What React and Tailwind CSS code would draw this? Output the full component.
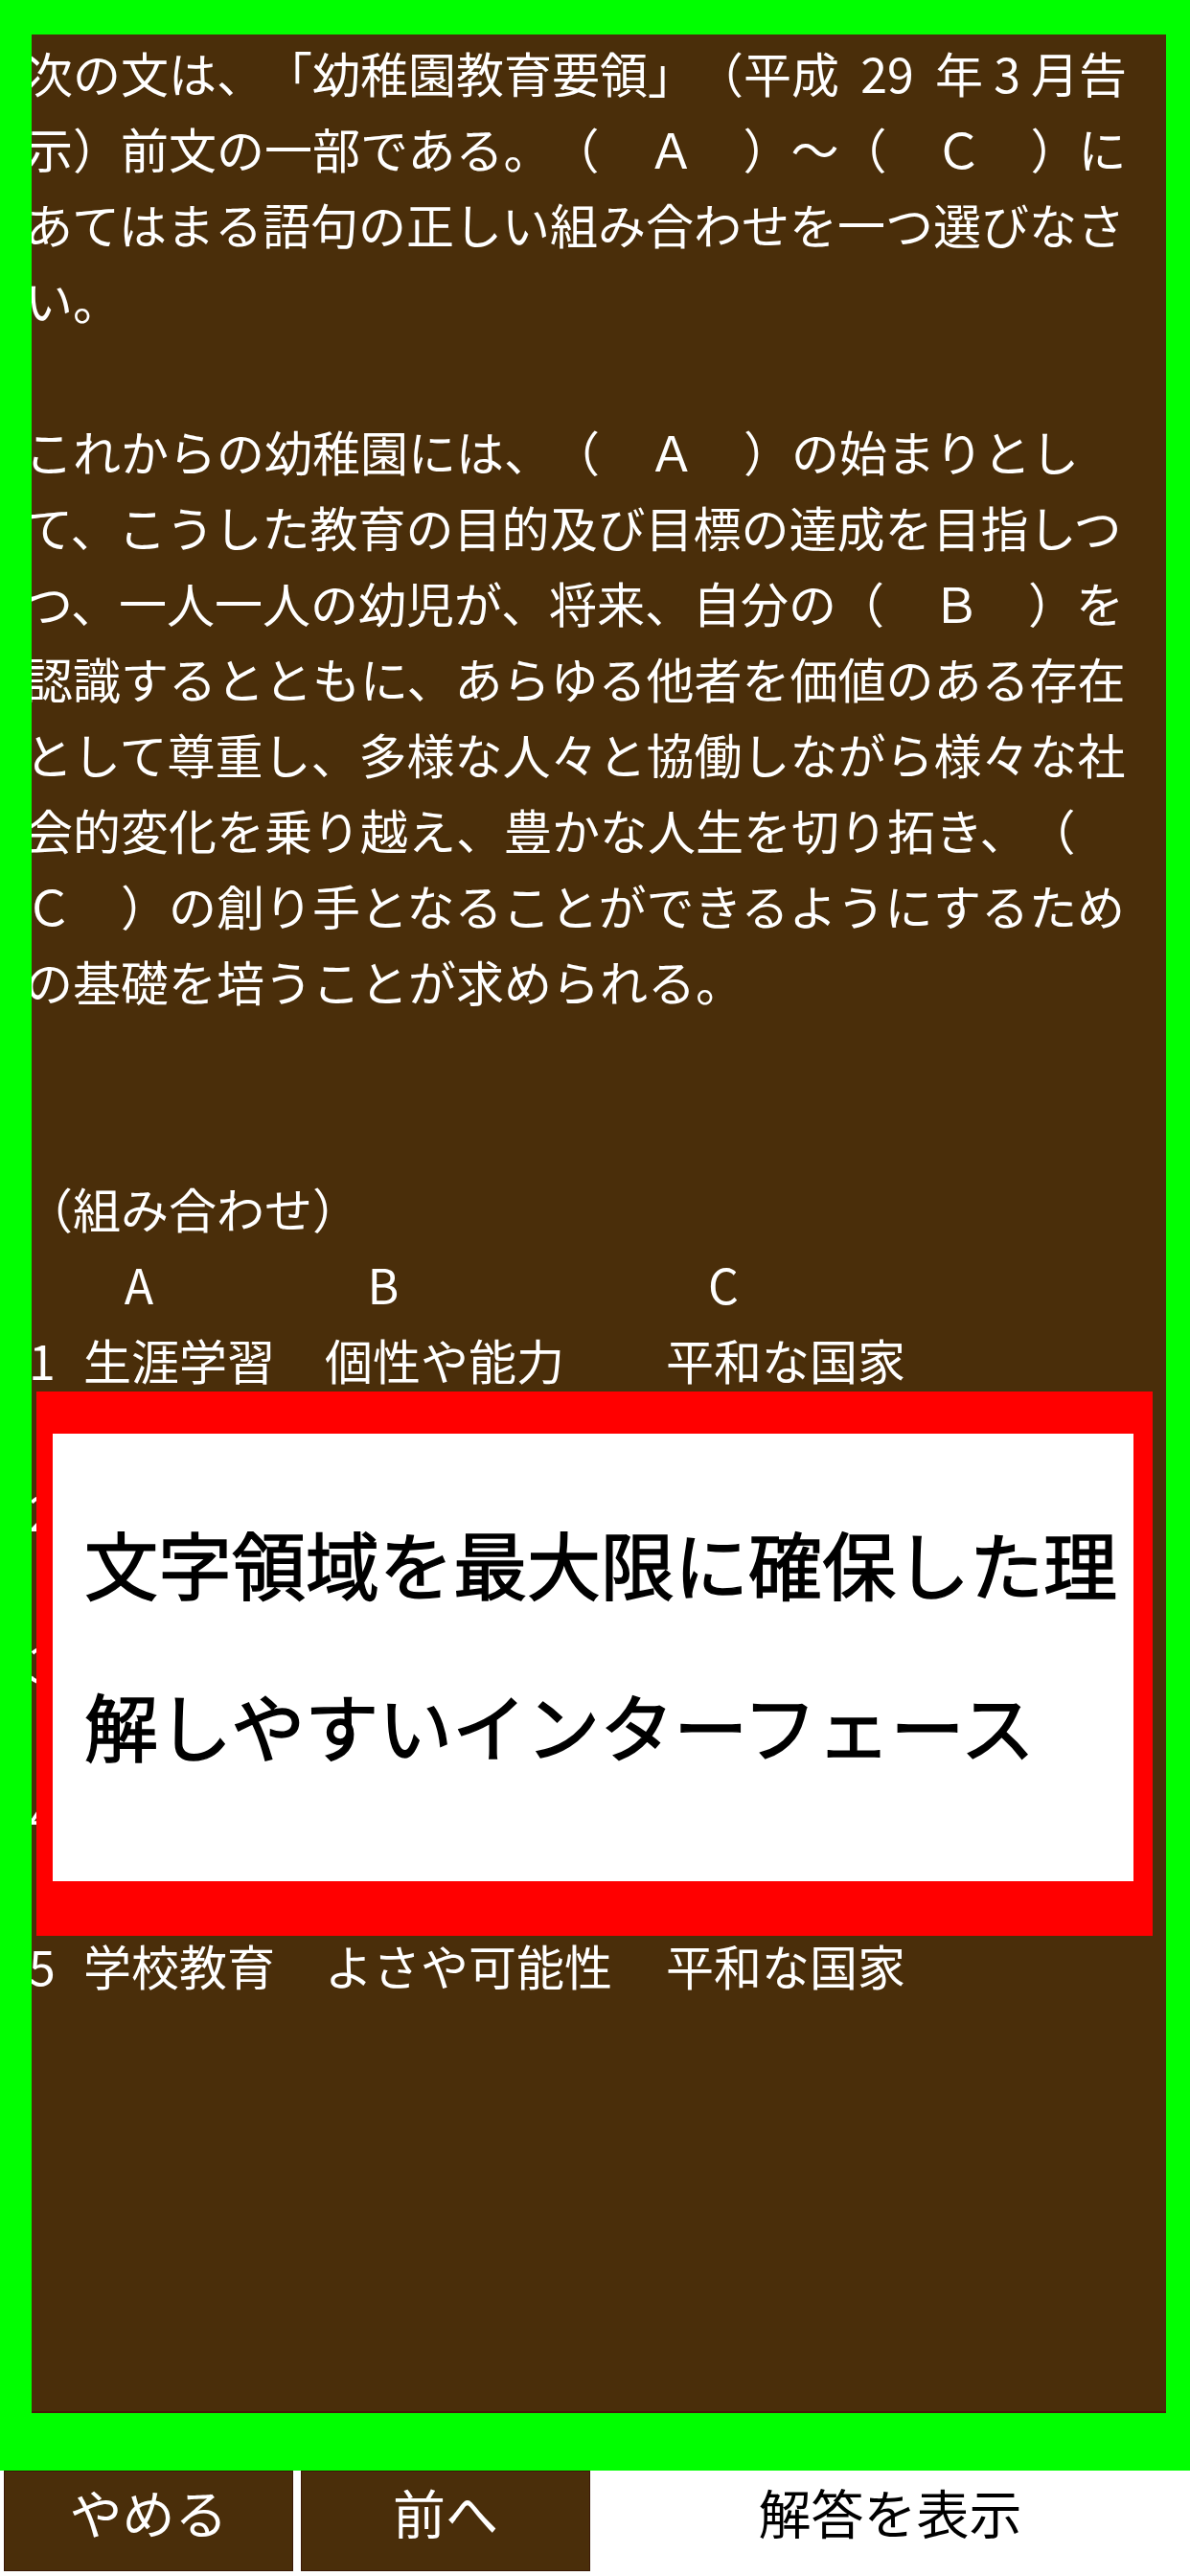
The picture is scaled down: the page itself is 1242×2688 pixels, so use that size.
import React from "react";

const para1 = [
  <>次の文は、「幼稚園教育要領」（平成<span className="inline-block w-[100px] text-center">29</span>年<span className="inline-block w-[50px] text-center">3</span>月告</>,
  "示）前文の一部である。（　Ａ　）～（　Ｃ　）に",
  "あてはまる語句の正しい組み合わせを一つ選びなさ",
  "い。",
];

const para2 = [
  "これからの幼稚園には、（　Ａ　）の始まりとし",
  "て、こうした教育の目的及び目標の達成を目指しつ",
  "つ、一人一人の幼児が、将来、自分の（　Ｂ　）を",
  "認識するとともに、あらゆる他者を価値のある存在",
  "として尊重し、多様な人々と協働しながら様々な社",
  "会的変化を乗り越え、豊かな人生を切り拓き、（",
  "Ｃ　）の創り手となることができるようにするため",
  "の基礎を培うことが求められる。",
];

const rows = [
  ["1", "生涯学習", "個性や能力", "平和な国家"],
  ["2", "生涯学習", "よさや可能性", "持続可能な社会"],
  ["3", "学校教育", "個性や能力", "持続可能な社会"],
  ["4", "学校教育", "よさや可能性", "持続可能な社会"],
  ["5", "学校教育", "よさや可能性", "平和な国家"],
];

function Line({ children }) {
  return <div className="h-[79px] leading-[79px] whitespace-nowrap">{children}</div>;
}

export default function App() {
  return (
    <div className="w-[1242px] h-[2688px] bg-white overflow-hidden font-['Noto_Sans_CJK_JP','Noto_Sans',sans-serif] [text-spacing-trim:space-all]">
      <div className="bg-[#00ff00] pt-[36px] pl-[33px] pr-[25px] pb-[60px]">
        <div className="relative h-[2482px] bg-[#4a2e0a] border-b-2 border-[#4a1808] overflow-hidden">
          <div className="ml-[-7px] text-[50px] text-white">
            {para1.map((l, i) => (
              <Line key={"a" + i}>{l}</Line>
            ))}
            <Line />
            {para2.map((l, i) => (
              <Line key={"b" + i}>{l}</Line>
            ))}
            <Line />
            <Line />
            <Line>（組み合わせ）</Line>
            <Line>
              <div className="flex">
                <span className="ml-[94px] w-[50px] text-center">A</span>
                <span className="ml-[205px] w-[50px] text-center">B</span>
                <span className="ml-[305px] w-[50px] text-center">C</span>
              </div>
            </Line>
            {rows.map((r, i) => (
              <div key={r[0]}>
                {i > 0 && <Line />}
                <Line>
                  <div className="flex">
                    <span className="w-[61px] pl-[4px]">{r[0]}</span>
                    <span className="w-[252px]">{r[1]}</span>
                    <span className="w-[356px]">{r[2]}</span>
                    <span>{r[3]}</span>
                  </div>
                </Line>
              </div>
            ))}
          </div>

          {/* overlay caption */}
          <div className="absolute left-[5px] top-[1416px] w-[1165px] h-[568px] bg-[#ff0000] pt-[44px] pl-[17px] pr-[20px] pb-[57px]">
            <div className="h-full bg-white pl-[33px] pt-[50px] text-[77px] font-normal leading-[169px] text-black whitespace-nowrap [-webkit-text-stroke:1.5px_black]">
              <div>文字領域を最大限に確保した理</div>
              <div>解しやすいインターフェース</div>
            </div>
          </div>
        </div>
      </div>

      <div className="flex h-[105px] bg-white text-[55px]">
        <button className="ml-[4px] w-[302px] h-full bg-[#4a2e0a] border border-[#3a1806] text-white flex items-center justify-center pb-[20px]">
          やめる
        </button>
        <button className="ml-[8px] w-[302px] h-full bg-[#4a2e0a] border border-[#3a1806] text-white flex items-center justify-center pb-[20px]">
          前へ
        </button>
        <button className="flex-1 h-full bg-white text-black flex items-center justify-center pb-[20px]">
          解答を表示
        </button>
      </div>
    </div>
  );
}
